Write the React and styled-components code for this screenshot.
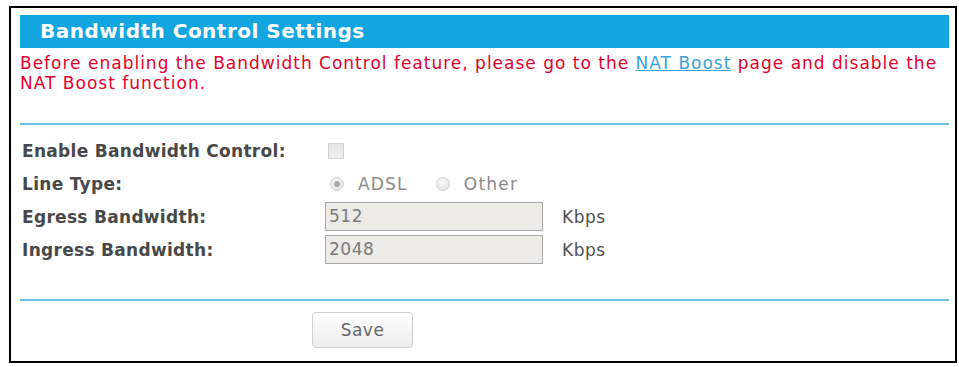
import React from 'react'
import styled, { createGlobalStyle } from 'styled-components'

const GlobalStyle = createGlobalStyle`
  body {
    margin: 0;
    background: #fff;
    font-family: "DejaVu Sans", Verdana, sans-serif;
  }
`

const Frame = styled.div`
  box-sizing: border-box;
  margin: 6px 0 0 9px;
  width: 948px;
  height: 357px;
  border: 2px solid #000;
  padding: 7px 6px 0 9px;
`

const TitleBar = styled.div`
  height: 33px;
  background: #12a5df;
  color: #fff;
  font-weight: bold;
  font-size: 20px;
  letter-spacing: 0.5px;
  line-height: 33px;
  padding-left: 20px;
`

const Notice = styled.div`
  color: #e4002b;
  font-size: 17px;
  letter-spacing: 1px;
  line-height: 20px;
  margin-top: 5px;
  a {
    color: #3a9fd6;
    text-decoration: underline;
  }
`

const Divider = styled.div`
  height: 2px;
  background: #6cc0e8;
  margin-top: ${p => p.gap}px;
`

const Form = styled.div`
  margin-top: 9px;
`

const Row = styled.div`
  display: grid;
  grid-template-columns: 305px auto;
  align-items: center;
  height: 33px;
`

const Label = styled.div`
  font-weight: bold;
  font-size: 17px;
  letter-spacing: 0.3px;
  color: #484848;
  padding-left: 2px;
`

const Field = styled.div`
  display: flex;
  align-items: center;
`

const Check = styled.span`
  box-sizing: border-box;
  width: 16px;
  height: 16px;
  margin-left: 3px;
  border: 1px solid #d2d2d2;
  background: linear-gradient(#e4e4e4, #f0f0f0);
`

const Radio = styled.span`
  box-sizing: border-box;
  width: 14px;
  height: 14px;
  margin-left: ${p => p.first ? 5 : 28}px;
  border-radius: 50%;
  border: 1px solid #cfcfcf;
  background: radial-gradient(circle at 40% 40%, #fafafa, #dedede);
  display: flex;
  align-items: center;
  justify-content: center;
  &::after {
    content: '';
    width: 6px;
    height: 6px;
    border-radius: 50%;
    background: ${p => p.checked ? '#a8a8a8' : 'transparent'};
  }
`

const RadioText = styled.span`
  font-size: 17px;
  letter-spacing: 1.2px;
  color: #8a8a8a;
  margin-left: 14px;
`

const NumberInput = styled.div`
  box-sizing: border-box;
  width: 218px;
  height: 29px;
  border: 1px solid #a8a8a8;
  background: #ecebe6;
  color: #7a7a7a;
  font-size: 17px;
  letter-spacing: 0.5px;
  line-height: 27px;
  padding-left: 3px;
`

const Unit = styled.span`
  font-size: 17px;
  letter-spacing: 0.5px;
  color: #505050;
  margin-left: 19px;
`

const SaveButton = styled.button`
  box-sizing: border-box;
  display: block;
  margin: 11px 0 0 292px;
  width: 101px;
  height: 36px;
  border: 1px solid #cfcfcf;
  border-radius: 4px;
  background: linear-gradient(#ffffff, #ececec);
  color: #666;
  font-family: "DejaVu Sans", Verdana, sans-serif;
  font-size: 17px;
  letter-spacing: 0.5px;
`

export default function App() {
  return (
    <>
      <GlobalStyle />
      <Frame>
        <TitleBar>Bandwidth Control Settings</TitleBar>
        <Notice>
          Before enabling the Bandwidth Control feature, please go to the <a href="#">NAT Boost</a> page and disable the<br />
          NAT Boost function.
        </Notice>
        <Divider gap={30} />
        <Form>
          <Row>
            <Label>Enable Bandwidth Control:</Label>
            <Field><Check /></Field>
          </Row>
          <Row>
            <Label>Line Type:</Label>
            <Field>
              <Radio first checked />
              <RadioText>ADSL</RadioText>
              <Radio />
              <RadioText>Other</RadioText>
            </Field>
          </Row>
          <Row>
            <Label>Egress Bandwidth:</Label>
            <Field>
              <NumberInput>512</NumberInput>
              <Unit>Kbps</Unit>
            </Field>
          </Row>
          <Row>
            <Label>Ingress Bandwidth:</Label>
            <Field>
              <NumberInput>2048</NumberInput>
              <Unit>Kbps</Unit>
            </Field>
          </Row>
        </Form>
        <Divider gap={33} />
        <SaveButton type="button">Save</SaveButton>
      </Frame>
    </>
  )
}
